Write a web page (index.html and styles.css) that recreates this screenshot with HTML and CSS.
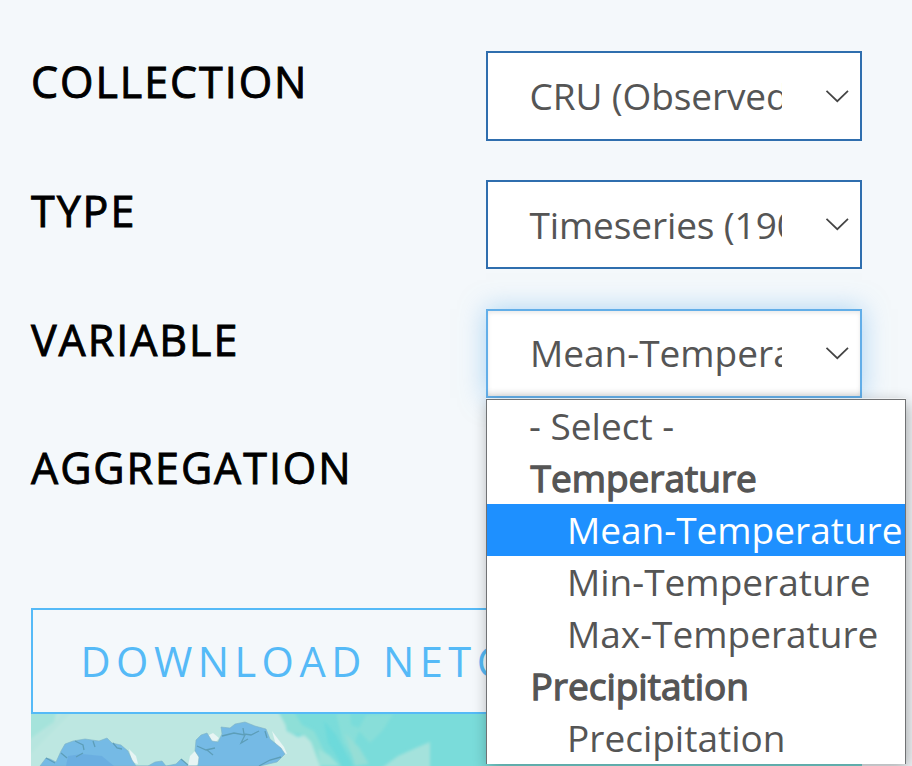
FILE: index.html
```html
<!DOCTYPE html>
<html lang="en">
<head>
<meta charset="utf-8">
<title>Download data</title>
<link rel="stylesheet" href="styles.css">
</head>
<body>
<main class="panel">
  <div class="row">
    <span class="label">COLLECTION</span>
    <div class="select"><span class="value tight">CRU (Observed)</span><svg class="chevron" viewBox="0 0 24 14"><path d="M1.5 1.8 12.3 12.2 23 1.8"/></svg></div>
  </div>
  <div class="row">
    <span class="label">TYPE</span>
    <div class="select short"><span class="value tight">Timeseries (1901-2020)</span><svg class="chevron" viewBox="0 0 24 14"><path d="M1.5 1.8 12.3 12.2 23 1.8"/></svg></div>
  </div>
  <div class="row third">
    <span class="label">VARIABLE</span>
    <div class="select short focused"><span class="value">Mean-Temperature</span><svg class="chevron" viewBox="0 0 24 14"><path d="M1.5 1.8 12.3 12.2 23 1.8"/></svg>
      <div class="menu">
        <div class="option">- Select -</div>
        <div class="group">Temperature</div>
        <div class="option child active">Mean-Temperature</div>
        <div class="option child">Min-Temperature</div>
        <div class="option child">Max-Temperature</div>
        <div class="group">Precipitation</div>
        <div class="option child">Precipitation</div>
      </div>
    </div>
  </div>
  <div class="row">
    <span class="label">AGGREGATION</span>
  </div>
  <div class="download"><span>DOWNLOAD NETCDF</span></div>
  <svg class="map" viewBox="31 714 831 52" preserveAspectRatio="none">
    <defs>
      <filter id="soft" x="-10%" y="-30%" width="120%" height="160%"><feGaussianBlur stdDeviation="1.8"/></filter>
      <filter id="edge" x="-5%" y="-5%" width="110%" height="110%"><feGaussianBlur stdDeviation="0.7"/></filter>
    </defs>
    <path fill="#7adcda" d="M31 714H862V766H31z"/>
    <g filter="url(#soft)">
      <path fill="#bde7e1" d="M25 708H276L284 718 287 731 298 737 308 734 316 748 321 770H25z"/>
      <path fill="#a5e3db" d="M25 708H58L54 722 43 730 25 743z"/>
      <path fill="#aee3dc" d="M25 743 43 732 57 719 62 709 75 709 48 736 31 754z" opacity=".4"/>
      <path fill="#8edfd7" d="M276 708H292L302 725 314 731 323 749 334 766H320L311 742 304 735 290 733z"/>
      <path fill="#96e1d7" d="M336 714 350 712 351 725 359 728 366 715 393 714 383 730 370 743 359 731 354 744 367 764 357 763 343 742z" opacity=".5"/>
      <path fill="#5fd7dc" d="M324 721 336 735 344 750 353 766 344 770 335 753 328 743z" opacity=".5"/>
      <path fill="#9fe2da" d="M318 749 329 755 340 766H320z"/>
      <path fill="#a4e2dc" d="M430 742 430 770H379L398 756 418 747z"/>
      <path fill="#9adfd6" d="M345 733 359 747 369 764 355 766z" opacity=".8"/>
    </g>
    <g filter="url(#edge)">
      <path fill="#e7f5f4" d="M203 738 213 733 219 738 215 743zM190 756 195 751 201 761 195 767 188 766zM272 731 284 747 287 754 278 752zM129 749 136 756 138 764 132 762z"/>
      <path fill="#75bae5" stroke="#7fb4c4" stroke-width=".6" d="M40 766 46 758 50 759 56 762 61 751 65 744 73 741 85 739 99 741 107 738 112 743 121 745 128 751 132 760 136 766 148 766 155 762 162 761 166 766 176 764 181 759 188 766H198L199 757 195 751 196 740 201 735 207 733 212 741 218 742 222 734 221 727 230 728 235 724 245 722 255 726 266 729 270 739 281 748 285 754 277 762 260 766z"/>
      <path fill="#66a9df" opacity=".7" d="M68 756 82 754 102 756 114 766H66z"/>
      <g fill="none" stroke="#5a9bb4" stroke-width="1.3" opacity=".9">
        <path d="M75 741 83 745 84 750M93 741 95 747M113 743 117 748 122 749M61 753 67 758M76 757 83 753"/>
        <path d="M197 746 206 750 215 748M207 750 213 755M222 736 234 733 245 735 241 743 248 739M243 728 244 734 251 735 259 731M265 731 267 738"/>
        <path d="M46 758 55 763M188 765 181 759M259 766 270 760 281 757"/>
      </g>
    </g>
  </svg>
</main>
</body>
</html>
```
FILE: styles.css
```css
* { box-sizing: border-box; }
html, body { margin: 0; height: 100%; overflow: hidden; }
body {
  background: #f4f8fb;
  color: #555;
  font-family: "Open Sans", sans-serif;
}
.panel {
  width: 831px;
  margin-left: 31px;
  padding-top: 51px;
}
.row {
  display: flex;
  justify-content: space-between;
  align-items: flex-start;
  height: 129px;
}
.row.third { height: 128px; }
.label {
  color: #000;
  font-size: 43px;
  font-weight: 400;
  line-height: 62px;
  letter-spacing: 1.95px;
  -webkit-text-stroke: .9px #000;
  white-space: nowrap;
}
.select {
  position: relative;
  display: flex;
  align-items: center;
  justify-content: space-between;
  width: 376px;
  height: 90px;
  padding: 0 11px 0 41px;
  border: 2px solid #2f6eae;
  background: #fff;
}
.select.short { height: 89px; }
.short .chevron { margin-bottom: 2px; }
.select.focused {
  border-color: #62aee8;
  box-shadow: 0 0 24px rgba(98, 178, 238, .5), inset 0 2px 4px rgba(0, 0, 0, .09), inset 0 -7px 7px -5px rgba(0, 0, 0, .12);
}
.focused .value { margin-bottom: 2px; }
.value {
  width: 253px;
  padding-left: 1px;
  overflow: hidden;
  white-space: nowrap;
  font-size: 37px;
  line-height: 52px;
}
.value.tight {
  padding-left: .5px;
  letter-spacing: -.12px;
}
.chevron {
  width: 24px;
  height: 14px;
  fill: none;
  stroke: #444;
  stroke-width: 1.7;
}
.menu {
  position: absolute;
  z-index: 2;
  top: 88px;
  left: -2px;
  width: 420px;
  height: 365px;
  border: 1px solid #707274;
  border-bottom: 0;
  background: #fff;
  box-shadow: 0 -1px 0 rgba(255, 255, 255, .5), 2px 4px 14px rgba(0, 0, 0, .32);
}
.option, .group {
  height: 52px;
  padding-left: 42px;
  font-size: 37px;
  line-height: 52px;
  white-space: nowrap;
}
.group {
  padding-left: 43.5px;
  -webkit-text-stroke: 1.3px #555;
}
.child { padding-left: 80px; }
.active { background: #1e90ff; color: #fff; }
.download {
  display: flex;
  align-items: center;
  height: 106px;
  margin-top: 42px;
  padding-left: 47.5px;
  border: 2px solid #55baf7;
  color: #55baf7;
  font-size: 41.5px;
  letter-spacing: 5.5px;
  white-space: nowrap;
}
.map {
  display: block;
  width: 831px;
  height: 52px;
}
```
